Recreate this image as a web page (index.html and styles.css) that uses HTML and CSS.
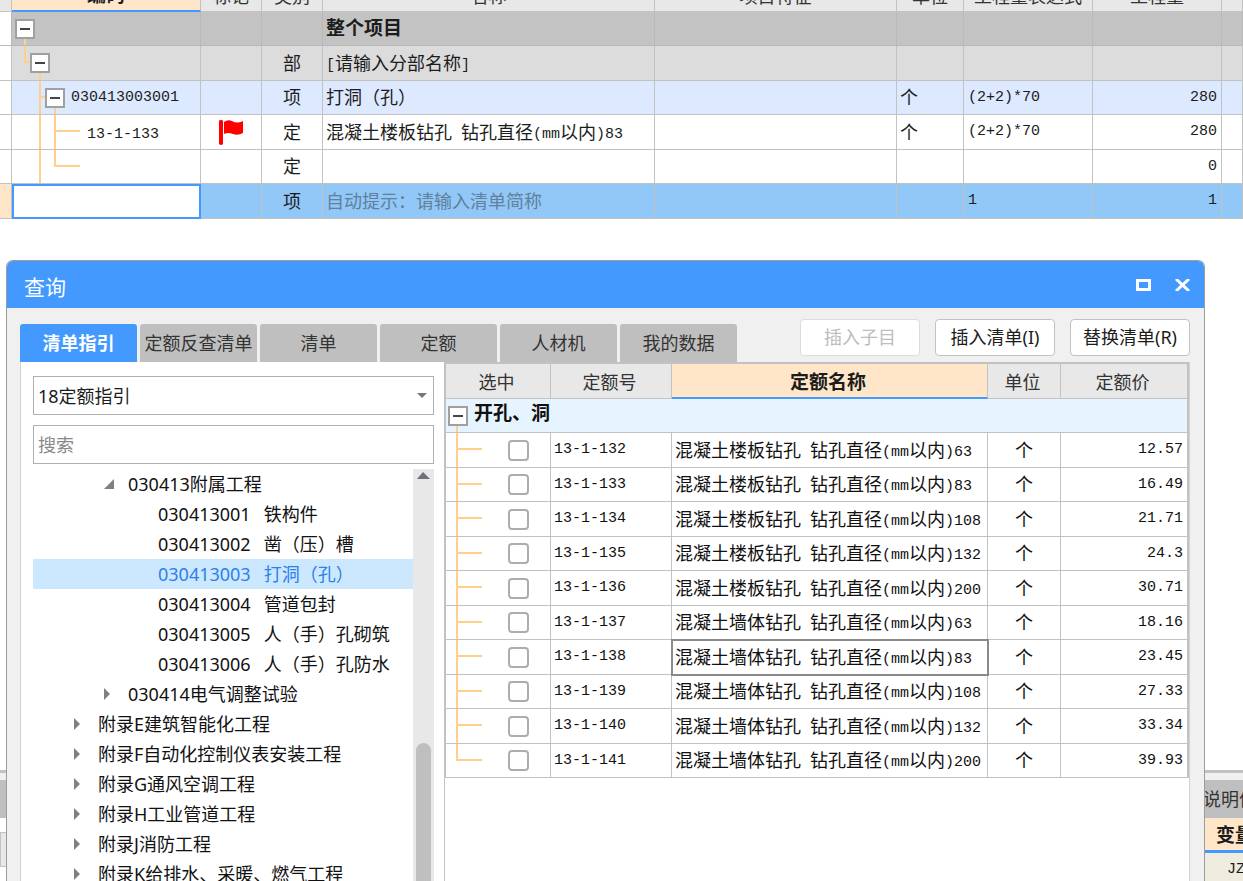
FILE: index.html
```html
<!DOCTYPE html>
<html lang="zh-CN">
<head>
<meta charset="utf-8">
<title>查询</title>
<link rel="stylesheet" href="styles.css">
</head>
<body>
<main class="sheet">
  <table class="grid main-grid">
    <colgroup><col class="c-gutter"><col class="c-code"><col class="c-mark"><col class="c-mark"><col><col class="c-feature"><col class="c-unit"><col class="c-expr"><col class="c-expr"><col class="c-rest"></colgroup>
    <thead>
      <tr><th></th><th class="current"><div class="cut">编码</div></th><th><div class="cut">标记</div></th><th><div class="cut">类别</div></th><th><div class="cut">名称</div></th><th><div class="cut">项目特征</div></th><th><div class="cut">单位</div></th><th><div class="cut">工程量表达式</div></th><th><div class="cut">工程量</div></th><th></th></tr>
    </thead>
    <tbody>
      <tr class="row-project"><td class="gutter"></td><td class="tree-cell"><svg class="lines" width="80" height="35"><path d="M13 17V35"/></svg><button class="toggle" aria-label="折叠"></button></td><td></td><td></td><td class="strong">整个项目</td><td></td><td></td><td></td><td></td><td></td></tr>
      <tr class="row-part"><td class="gutter"></td><td class="tree-cell depth-1"><svg class="lines" width="80" height="35"><path d="M13 0V16H28V35"/></svg><button class="toggle" aria-label="折叠"></button></td><td></td><td class="mid">部</td><td><span class="n">[</span>请输入分部名称<span class="n">]</span></td><td></td><td></td><td></td><td></td><td></td></tr>
      <tr class="row-item"><td class="gutter"></td><td class="tree-cell depth-2"><svg class="lines" width="80" height="35"><path d="M28 0V35M28 16H43V35"/></svg><button class="toggle" aria-label="折叠"></button><span class="n">030413003001</span></td><td></td><td class="mid">项</td><td>打洞（孔）</td><td></td><td>个</td><td class="n">(2+2)*70</td><td class="n num">280</td><td></td></tr>
      <tr><td class="gutter"></td><td class="tree-cell depth-3"><svg class="lines" width="80" height="35"><path d="M28 0V35M43 0V35M43 16H68"/></svg><span class="n">13-1-133</span></td><td class="mark"><svg class="flag" width="24" height="25" viewBox="0 0 24 25"><path d="M0 1Q0 0 2 0Q4 0 4 1V24Q2 26 0 24Z"/><path d="M5 2Q9-1 13 1Q18 4 24 1V13Q19 16 14 14Q9 12 5 14Z"/></svg></td><td class="mid">定</td><td>混凝土楼板钻孔<span class="n"> </span>钻孔直径<span class="n">(mm</span>以内<span class="n">)83</span></td><td></td><td>个</td><td class="n">(2+2)*70</td><td class="n num">280</td><td></td></tr>
      <tr><td class="gutter"></td><td class="tree-cell"><svg class="lines" width="80" height="35"><path d="M28 0V35M43 0V16H68"/></svg></td><td></td><td class="mid">定</td><td></td><td></td><td></td><td></td><td class="n num">0</td><td></td></tr>
      <tr class="row-new"><td class="gutter"></td><td class="edit"><input class="cell-input" type="text" aria-label="编码"></td><td></td><td class="mid">项</td><td class="hint">自动提示：请输入清单简称</td><td></td><td></td><td class="n">1</td><td class="n num">1</td><td></td></tr>
    </tbody>
  </table>
</main>

<footer class="lower">
  <div class="lower-main"><div class="strip"></div><div class="gap"></div><div class="lower-head"></div></div>
  <div class="lower-side"><div class="strip">说明信息</div><div class="side-head">变量</div><div class="side-row">JZ</div></div>
</footer>

<section class="dialog" role="dialog" aria-labelledby="dialog-title">
  <header class="titlebar">
    <h1 id="dialog-title">查询</h1>
    <button aria-label="最大化"><svg width="15" height="12" viewBox="0 0 15 12"><path d="M0 0H15V12H0ZM3 3V9H12V3Z" fill="#fff" fill-rule="evenodd"/></svg></button>
    <button aria-label="关闭"><svg width="15" height="12" viewBox="0 0 15 12"><path d="M1 0L14 12M14 0L1 12" fill="none" stroke="#fff" stroke-width="3"/></svg></button>
  </header>
  <div class="content">
    <div class="toolbar">
      <nav class="tabs" role="tablist">
        <button role="tab" aria-selected="true" class="tab active">清单指引</button>
        <button role="tab" class="tab">定额反查清单</button>
        <button role="tab" class="tab">清单</button>
        <button role="tab" class="tab">定额</button>
        <button role="tab" class="tab">人材机</button>
        <button role="tab" class="tab">我的数据</button>
      </nav>
      <div class="actions">
        <button class="action" disabled>插入子目</button>
        <button class="action">插入清单(I)</button>
        <button class="action">替换清单(R)</button>
      </div>
    </div>
    <div class="panel">
      <aside class="guide">
        <div class="combo"><select aria-label="定额指引"><option>18定额指引</option></select><svg width="10" height="5" viewBox="0 0 10 5"><path d="M0 0H10L5 5Z" fill="#777"/></svg></div>
        <input class="search" type="text" placeholder="搜索" aria-label="搜索">
        <div class="tree-wrap">
          <ul class="tree">
            <li class="l2"><button aria-label="折叠"><svg width="10" height="10"><path d="M10 0V10H0Z"/></svg></button>030413附属工程</li>
            <li class="l3"><span>030413001</span><span>铁构件</span></li>
            <li class="l3"><span>030413002</span><span>凿（压）槽</span></li>
            <li class="l3 selected"><span>030413003</span><span>打洞（孔）</span></li>
            <li class="l3"><span>030413004</span><span>管道包封</span></li>
            <li class="l3"><span>030413005</span><span>人（手）孔砌筑</span></li>
            <li class="l3"><span>030413006</span><span>人（手）孔防水</span></li>
            <li class="l2"><button aria-label="展开"><svg width="6" height="12"><path d="M0 0L6 6L0 12Z"/></svg></button>030414电气调整试验</li>
            <li><button aria-label="展开"><svg width="6" height="12"><path d="M0 0L6 6L0 12Z"/></svg></button>附录E建筑智能化工程</li>
            <li><button aria-label="展开"><svg width="6" height="12"><path d="M0 0L6 6L0 12Z"/></svg></button>附录F自动化控制仪表安装工程</li>
            <li><button aria-label="展开"><svg width="6" height="12"><path d="M0 0L6 6L0 12Z"/></svg></button>附录G通风空调工程</li>
            <li><button aria-label="展开"><svg width="6" height="12"><path d="M0 0L6 6L0 12Z"/></svg></button>附录H工业管道工程</li>
            <li><button aria-label="展开"><svg width="6" height="12"><path d="M0 0L6 6L0 12Z"/></svg></button>附录J消防工程</li>
            <li><button aria-label="展开"><svg width="6" height="12"><path d="M0 0L6 6L0 12Z"/></svg></button>附录K给排水、采暖、燃气工程</li>
          </ul>
          <div class="scrollbar"><svg width="13" height="7"><path d="M0 7L6 0L13 7Z" fill="#707078"/></svg><div class="thumb"></div></div>
        </div>
      </aside>
      <div class="result">
        <table class="grid quota-grid">
          <colgroup><col class="q-check"><col class="q-code"><col><col class="q-unit"><col class="q-price"></colgroup>
          <thead><tr><th>选中</th><th>定额号</th><th class="current">定额名称</th><th>单位</th><th>定额价</th></tr></thead>
          <tbody>
            <tr class="group"><td colspan="5" class="tree-cell"><svg class="lines" width="40" height="35"><path d="M11 17V35"/></svg><button class="toggle" aria-label="折叠"></button><span class="strong">开孔、洞</span></td></tr>
            <tr><td class="pick"><svg class="lines" width="40" height="35"><path d="M11 0V35M11 16H36"/></svg><input type="checkbox" aria-label="13-1-132"></td><td class="n">13-1-132</td><td>混凝土楼板钻孔<span class="n"> </span>钻孔直径<span class="n">(mm</span>以内<span class="n">)63</span></td><td class="mid">个</td><td class="n num">12.57</td></tr>
            <tr><td class="pick"><svg class="lines" width="40" height="35"><path d="M11 0V35M11 16H36"/></svg><input type="checkbox" aria-label="13-1-133"></td><td class="n">13-1-133</td><td>混凝土楼板钻孔<span class="n"> </span>钻孔直径<span class="n">(mm</span>以内<span class="n">)83</span></td><td class="mid">个</td><td class="n num">16.49</td></tr>
            <tr><td class="pick"><svg class="lines" width="40" height="35"><path d="M11 0V35M11 16H36"/></svg><input type="checkbox" aria-label="13-1-134"></td><td class="n">13-1-134</td><td>混凝土楼板钻孔<span class="n"> </span>钻孔直径<span class="n">(mm</span>以内<span class="n">)108</span></td><td class="mid">个</td><td class="n num">21.71</td></tr>
            <tr><td class="pick"><svg class="lines" width="40" height="35"><path d="M11 0V35M11 16H36"/></svg><input type="checkbox" aria-label="13-1-135"></td><td class="n">13-1-135</td><td>混凝土楼板钻孔<span class="n"> </span>钻孔直径<span class="n">(mm</span>以内<span class="n">)132</span></td><td class="mid">个</td><td class="n num">24.3</td></tr>
            <tr><td class="pick"><svg class="lines" width="40" height="35"><path d="M11 0V35M11 16H36"/></svg><input type="checkbox" aria-label="13-1-136"></td><td class="n">13-1-136</td><td>混凝土楼板钻孔<span class="n"> </span>钻孔直径<span class="n">(mm</span>以内<span class="n">)200</span></td><td class="mid">个</td><td class="n num">30.71</td></tr>
            <tr><td class="pick"><svg class="lines" width="40" height="35"><path d="M11 0V35M11 16H36"/></svg><input type="checkbox" aria-label="13-1-137"></td><td class="n">13-1-137</td><td>混凝土墙体钻孔<span class="n"> </span>钻孔直径<span class="n">(mm</span>以内<span class="n">)63</span></td><td class="mid">个</td><td class="n num">18.16</td></tr>
            <tr><td class="pick"><svg class="lines" width="40" height="35"><path d="M11 0V35M11 16H36"/></svg><input type="checkbox" aria-label="13-1-138"></td><td class="n">13-1-138</td><td class="focused">混凝土墙体钻孔<span class="n"> </span>钻孔直径<span class="n">(mm</span>以内<span class="n">)83</span></td><td class="mid">个</td><td class="n num">23.45</td></tr>
            <tr><td class="pick"><svg class="lines" width="40" height="35"><path d="M11 0V35M11 16H36"/></svg><input type="checkbox" aria-label="13-1-139"></td><td class="n">13-1-139</td><td>混凝土墙体钻孔<span class="n"> </span>钻孔直径<span class="n">(mm</span>以内<span class="n">)108</span></td><td class="mid">个</td><td class="n num">27.33</td></tr>
            <tr><td class="pick"><svg class="lines" width="40" height="35"><path d="M11 0V35M11 16H36"/></svg><input type="checkbox" aria-label="13-1-140"></td><td class="n">13-1-140</td><td>混凝土墙体钻孔<span class="n"> </span>钻孔直径<span class="n">(mm</span>以内<span class="n">)132</span></td><td class="mid">个</td><td class="n num">33.34</td></tr>
            <tr><td class="pick"><svg class="lines" width="40" height="35"><path d="M11 0V16H36"/></svg><input type="checkbox" aria-label="13-1-141"></td><td class="n">13-1-141</td><td>混凝土墙体钻孔<span class="n"> </span>钻孔直径<span class="n">(mm</span>以内<span class="n">)200</span></td><td class="mid">个</td><td class="n num">39.93</td></tr>
          </tbody>
        </table>
      </div>
    </div>
  </div>
</section>
</body>
</html>
```

FILE: styles.css
```css
* { box-sizing: border-box; }

body {
  margin: 0;
  height: 100vh;
  overflow: hidden;
  display: flex;
  flex-direction: column;
  position: relative;
  background: #fff;
  color: #1c1c1c;
  font: 18px/20px "Noto Sans", "Noto Sans CJK SC", sans-serif;
}

button, input, select { font: inherit; color: inherit; margin: 0; }
button { padding: 0; border: 0; background: none; }

/* Grids */
.grid {
  width: 100%;
  table-layout: fixed;
  border-collapse: separate;
  border-spacing: 0;
  font-family: "Noto Sans CJK SC", sans-serif;
}
.grid th, .grid td {
  height: 35px;
  padding: 0 3px;
  border-right: 1px solid #c2c2c2;
  border-bottom: 1px solid #c2c2c2;
  text-align: left;
  white-space: pre;
  overflow: hidden;
}
.grid td { padding-bottom: 3px; }
.grid tbody tr:nth-child(odd) td { height: 34px; }
.grid th {
  padding-right: 6px;
  background: #e8e8e8;
  color: #333;
  font-weight: 400;
  text-align: center;
}
.grid th.current {
  background: #ffe6c8;
  border-bottom: 2px solid #4499ff;
  color: #1c1c1c;
  font-size: 19px;
  font-weight: 700;
}
.grid .n { font-family: "Liberation Mono", monospace; font-size: 15px; }
.grid span.n { line-height: 1px; vertical-align: 1px; }
.grid td.n { padding-bottom: 0; }
.grid .mid { text-align: center; }
.grid .num { text-align: right; padding-right: 4px; }
.strong { font-size: 19px; font-weight: 700; }

.tree-cell, .pick { position: relative; }
.lines {
  position: absolute;
  left: 0;
  top: 0;
  fill: none;
  stroke: #ffcf8c;
  stroke-width: 2;
}
.toggle {
  position: relative;
  width: 20px;
  height: 20px;
  margin-right: 6px;
  border: 2px solid #a0a0a0;
  background: linear-gradient(#444, #444) center / 10px 2px no-repeat #fff;
  vertical-align: middle;
}

/* Main sheet */
.sheet { flex: 1; min-height: 0; }
.c-gutter { width: 12px; }
.c-code { width: 189px; }
.c-mark { width: 61px; }
.c-feature { width: 242px; }
.c-unit { width: 67px; }
.c-expr { width: 129px; }
.c-rest { width: 21px; }
.main-grid th { height: 12px; padding: 0; }
.cut {
  display: flex;
  justify-content: center;
  align-items: flex-end;
  height: 10px;
  padding-bottom: 6px;
}
.main-grid td.gutter { background: #fff; }
.main-grid .mid { padding: 0 0 3px; }
.main-grid td.n { padding-left: 4px; }
.depth-1.tree-cell { padding-left: 18px; }
.depth-2.tree-cell { padding-left: 33px; }
.depth-3.tree-cell { padding-left: 75px; }
.row-project td { background: #c3c3c3; border-color: #b9b9b9; }
.row-part td { background: #dcdcdc; }
.row-item td { background: #dde9ff; }
.row-new td { background: #92c8f7; }
.main-grid .row-new .gutter { background: #ffe6c8; }
.grid .edit { padding: 0; border: 0; }
.cell-input {
  display: block;
  width: 100%;
  height: 35px;
  border: 2px solid #4499ff;
  background: #fff;
}
.grid .hint { color: #60809c; }
.grid .mark { padding-bottom: 0; }
.flag { display: block; margin: 0 auto; fill: #f00; }

/* Lower background panels */
.lower {
  display: flex;
  height: 111px;
  border-top: 3px solid #c2c2c2;
  background: #f0f0f0;
  padding-top: 7px;
}
.lower-main { flex: 1; background: #fff; }
.lower-side { width: 40px; overflow: hidden; white-space: nowrap; background: #eeecdf; }
.strip { height: 38px; padding-top: 9px; background: #bfbfbf; color: #333; }
.gap { height: 14px; }
.lower-head { height: 35px; background: #e8e8e8; border: 1px solid #c2c2c2; }
.side-head {
  height: 35px;
  padding: 7px 0 0 13px;
  background: #ffe6c8;
  border-bottom: 3px solid #4499ff;
  font-size: 19px;
  font-weight: 700;
}
.side-row { padding: 7px 0 0 24px; font-family: "Liberation Mono", monospace; font-size: 15px; }

/* Dialog */
.dialog {
  position: absolute;
  left: 6px;
  right: 38px;
  top: 260px;
  bottom: 0;
  display: flex;
  flex-direction: column;
  overflow: hidden;
  border: 1px solid #9c9c9c;
  border-bottom: 0;
  border-radius: 7px 7px 0 0;
  background: #f0f0f0;
}
.titlebar {
  display: flex;
  align-items: center;
  gap: 24px;
  height: 47px;
  padding: 0 14px 0 17px;
  background: #4499ff;
}
.titlebar h1 {
  flex: 1;
  margin: 0;
  padding-top: 4px;
  color: #fff;
  font-size: 21px;
  font-weight: 400;
}
.titlebar svg { display: block; }
.content {
  flex: 1;
  min-height: 0;
  display: flex;
  flex-direction: column;
  padding: 11px 14px 0 13px;
}
.toolbar { display: flex; justify-content: space-between; height: 43px; }
.tabs { display: flex; gap: 3px; align-items: flex-end; }
.tab {
  width: 117px;
  height: 38px;
  border-radius: 3px 3px 0 0;
  background: #bfbfbf;
  color: #333;
  white-space: nowrap;
}
.tab.active { background: #4499ff; color: #fff; font-weight: 700; }
.actions { display: flex; gap: 15px; }
.action {
  width: 120px;
  height: 37px;
  padding-bottom: 2px;
  border: 1px solid #c2c2c2;
  border-radius: 4px;
  background: #fff;
  white-space: nowrap;
}
.action:disabled { color: #bdbdbd; border-color: #dcdcdc; }
.panel {
  flex: 1;
  min-height: 0;
  display: flex;
  border: 1px solid #d2d2d2;
  border-width: 0 1px;
  background: #fff;
}

/* Guide tree */
.guide {
  width: 423px;
  display: flex;
  flex-direction: column;
  padding: 14px 10px 0 12px;
}
.combo { position: relative; }
.combo svg { position: absolute; right: 7px; top: 17px; }
.combo select, .search {
  display: block;
  width: 100%;
  height: 39px;
  padding: 0 4px;
  border: 1px solid #b0b0b0;
  border-radius: 0;
  background: #fff;
  appearance: none;
}
.search { margin: 10px 0 5px; }
.search::placeholder { color: #888; opacity: 1; }
.tree-wrap { flex: 1; min-height: 0; display: flex; }
.tree {
  flex: 1;
  margin: 0;
  padding: 0;
  overflow: hidden;
  list-style: none;
  color: #111;
}
.tree li {
  display: flex;
  align-items: center;
  height: 30px;
  padding-left: 41px;
  white-space: nowrap;
}
.tree .l2 { padding-left: 71px; }
.tree .l3 { padding-left: 125px; gap: 13px; }
.tree .selected { background: #cce8ff; color: #2d7fea; }
.tree button { width: 24px; text-align: left; }
.tree svg { display: block; fill: #808080; }
.scrollbar { width: 21px; background: #e8e8e8; padding: 3px 3px 0 3px; overflow: hidden; }
.scrollbar svg { display: block; margin: 0 auto; }
.thumb { height: 200px; margin-top: 264px; border-radius: 8px; background: #bfbfbf; }

/* Quota list */
.result { flex: 1; border-left: 1px solid #c2c2c2; }
.quota-grid { border: 1px solid #c2c2c2; border-width: 2px 1px 0 1px; }
.q-check { width: 105px; }
.q-code { width: 121px; }
.q-unit { width: 73px; }
.q-price { width: 127px; }
.group td { background: #e6f4ff; }
.quota-grid .tree-cell { padding-left: 2px; }
.quota-grid td { color: #111; }
.grid .pick { padding-bottom: 0; }
.pick input {
  appearance: none;
  display: block;
  width: 21px;
  height: 21px;
  margin-left: 59px;
  border: 2px solid #adadad;
  border-radius: 4px;
  background: #fff;
}
.quota-grid td.focused { outline: 2px solid #8a8a8a; outline-offset: -1px; }
```
